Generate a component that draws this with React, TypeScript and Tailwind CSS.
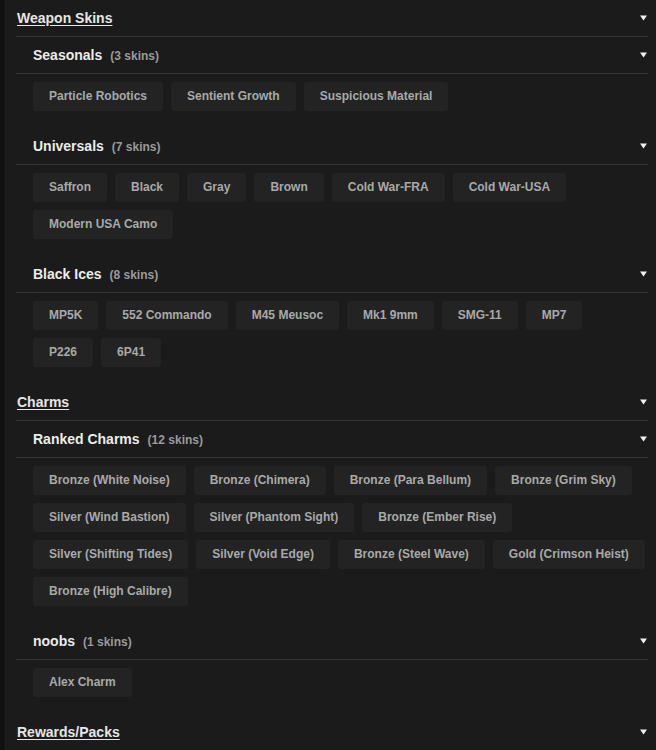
type Group = { name: string; items: string[] };
type Section = { title: string; groups: Group[] };

const sections: Section[] = [
  {
    title: "Weapon Skins",
    groups: [
      { name: "Seasonals", items: ["Particle Robotics", "Sentient Growth", "Suspicious Material"] },
      {
        name: "Universals",
        items: ["Saffron", "Black", "Gray", "Brown", "Cold War-FRA", "Cold War-USA", "Modern USA Camo"],
      },
      {
        name: "Black Ices",
        items: ["MP5K", "552 Commando", "M45 Meusoc", "Mk1 9mm", "SMG-11", "MP7", "P226", "6P41"],
      },
    ],
  },
  {
    title: "Charms",
    groups: [
      {
        name: "Ranked Charms",
        items: [
          "Bronze (White Noise)",
          "Bronze (Chimera)",
          "Bronze (Para Bellum)",
          "Bronze (Grim Sky)",
          "Silver (Wind Bastion)",
          "Silver (Phantom Sight)",
          "Bronze (Ember Rise)",
          "Silver (Shifting Tides)",
          "Silver (Void Edge)",
          "Bronze (Steel Wave)",
          "Gold (Crimson Heist)",
          "Bronze (High Calibre)",
        ],
      },
      { name: "noobs", items: ["Alex Charm"] },
    ],
  },
  { title: "Rewards/Packs", groups: [] },
];

function Arrow() {
  return (
    <svg width="7" height="6" viewBox="0 0 7 6" className="shrink-0">
      <path d="M0 0.5 L7 0.5 L3.5 5.5 Z" fill="#f0f0f0" />
    </svg>
  );
}

export default function App() {
  return (
    <main
      className="min-h-screen w-full bg-[#1b1b1b] border-l-[5px] border-[#121212]"
      style={{ fontFamily: '"Liberation Sans", Arial, sans-serif' }}
    >
      <div className="ml-[11px] mr-[8px]">
        {sections.map((section) => (
          <section key={section.title}>
            <div className="flex h-[37px] items-center justify-between border-b border-[#363636] pl-[1px] pr-[1px]">
              <span className="text-[14px] font-bold text-[#e6e6e6] underline underline-offset-2">
                {section.title}
              </span>
              <Arrow />
            </div>

            {section.groups.map((group) => (
              <div key={group.name}>
                <div className="flex h-[37px] items-center justify-between border-b border-[#363636] pl-[17px] pr-[1px]">
                  <div className="flex items-baseline">
                    <span className="text-[14px] font-bold text-[#ececec]">{group.name}</span>
                    <span className="ml-2 text-[12px] font-bold text-[#9a9a9a]">
                      ({group.items.length} skins)
                    </span>
                  </div>
                  <Arrow />
                </div>
                <div className="flex flex-wrap gap-x-2 gap-y-[8px] pl-[17px] pt-[8px] pb-[17px]">
                  {group.items.map((item) => (
                    <div
                      key={item}
                      className="rounded-[3px] bg-[#232323] px-4 py-[7px] text-[12px] font-bold leading-[15px] text-[#a9a9a9]"
                    >
                      {item}
                    </div>
                  ))}
                </div>
              </div>
            ))}
          </section>
        ))}
      </div>
    </main>
  );
}
